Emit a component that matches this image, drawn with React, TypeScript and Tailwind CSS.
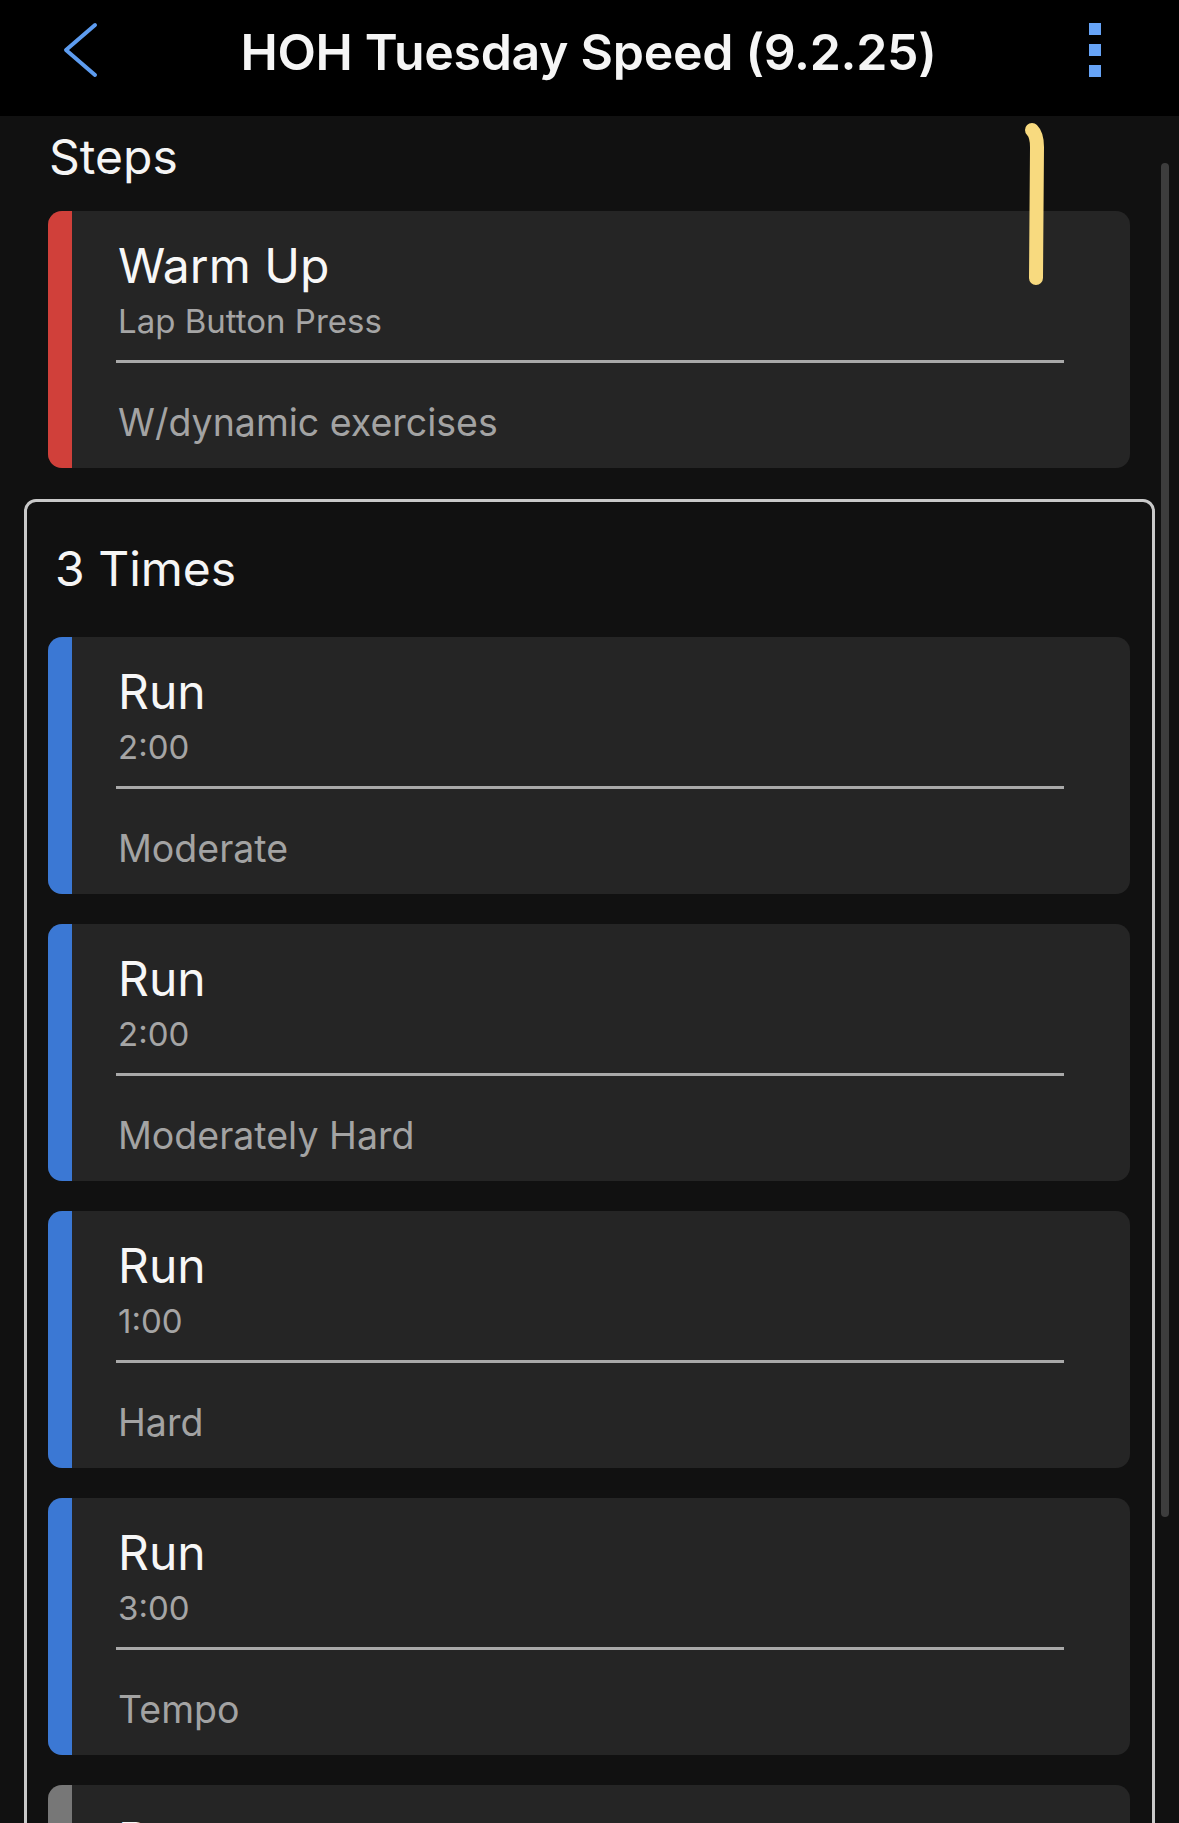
type Step = {
  title: string;
  detail: string;
  note: string;
  bar: string;
};

const warmUp: Step = {
  title: 'Warm Up',
  detail: 'Lap Button Press',
  note: 'W/dynamic exercises',
  bar: 'bg-[#d0403a]',
};

const repeatSteps: Step[] = [
  { title: 'Run', detail: '2:00', note: 'Moderate', bar: 'bg-[#3b78d4]' },
  { title: 'Run', detail: '2:00', note: 'Moderately Hard', bar: 'bg-[#3b78d4]' },
  { title: 'Run', detail: '1:00', note: 'Hard', bar: 'bg-[#3b78d4]' },
  { title: 'Run', detail: '3:00', note: 'Tempo', bar: 'bg-[#3b78d4]' },
  { title: 'Recover', detail: '1:00', note: 'Easy', bar: 'bg-[#777777]' },
];

function StepCard({ step }: { step: Step }) {
  return (
    <div className="flex h-[257px] w-[1082px] shrink-0 overflow-hidden rounded-[14px] bg-[#252525]">
      {/* colour strip shows the step type */}
      <div className={`w-[24px] shrink-0 ${step.bar}`} />
      <div className="flex flex-col pl-[46px] pt-[31px]">
        <div className="text-[48px] leading-none text-[#f7f7f7]">{step.title}</div>
        <div className="mt-[15px] text-[33px] leading-none text-[#a5a5a5]">{step.detail}</div>
        <div className="mt-[22px] h-[3px] w-[948px] -ml-[2px] bg-[#a9a9a9]" />
        <div className="mt-[41px] text-[37.5px] leading-none text-[#a3a3a3]">{step.note}</div>
      </div>
    </div>
  );
}

export default function App() {
  return (
    <div
      className="relative h-[1823px] w-[1179px] overflow-hidden bg-[#111111]"
      style={{ fontFamily: 'Inter, "Noto Sans", sans-serif' }}
    >
      {/* Top bar */}
      <header className="flex h-[116px] items-start bg-black">
        <div className="flex h-[100px] w-full items-center">
          <div className="flex flex-1 items-center pl-[62px]">
            <svg width="36" height="56" viewBox="0 0 36 56" fill="none">
              <polyline
                points="33,3 4,28 33,53"
                stroke="#5d9cf0"
                strokeWidth="4"
                strokeLinecap="round"
                strokeLinejoin="round"
              />
            </svg>
          </div>
          <h1 className="ml-[14px] mt-[4px] text-[50px] font-semibold leading-none tracking-[-0.3px] text-[#f5f5f5]">
            HOH Tuesday Speed (9.2.25)
          </h1>
          <div className="flex flex-1 justify-end pr-[78px]">
            <div className="flex flex-col gap-[9px]">
              <span className="h-[12px] w-[12px] bg-[#67a4f7]" />
              <span className="h-[12px] w-[12px] bg-[#67a4f7]" />
              <span className="h-[12px] w-[12px] bg-[#67a4f7]" />
            </div>
          </div>
        </div>
      </header>

      {/* Steps list */}
      <main className="flex flex-col">
        <h2 className="ml-[49px] mt-[17px] text-[48px] leading-none text-[#f5f5f5]">Steps</h2>

        <div className="ml-[48px] mt-[30px]">
          <StepCard step={warmUp} />
        </div>

        <section className="ml-[24px] mt-[31px] flex w-[1131px] flex-col rounded-[12px] border-[3px] border-[#c9c9c9] pb-[30px]">
          <h3 className="ml-[28px] mt-[43px] text-[48px] leading-none text-[#f5f5f5]">3 Times</h3>
          <div className="ml-[21px] mt-[44px] flex flex-col gap-[30px]">
            {repeatSteps.map((s, i) => (
              <StepCard key={i} step={s} />
            ))}
          </div>
        </section>
      </main>

      {/* scroll indicator */}
      <div className="absolute left-[1161px] top-[163px] h-[1354px] w-[8px] rounded-full bg-[#3d3d3d]" />

      {/* hand-drawn highlight mark */}
      <svg
        className="absolute left-[1015px] top-[115px]"
        width="40"
        height="185"
        viewBox="0 0 40 185"
        fill="none"
      >
        <path
          d="M17 15 Q22 20 22 32 L21 163"
          stroke="#f8da7f"
          strokeWidth="14"
          strokeLinecap="round"
        />
      </svg>
    </div>
  );
}
